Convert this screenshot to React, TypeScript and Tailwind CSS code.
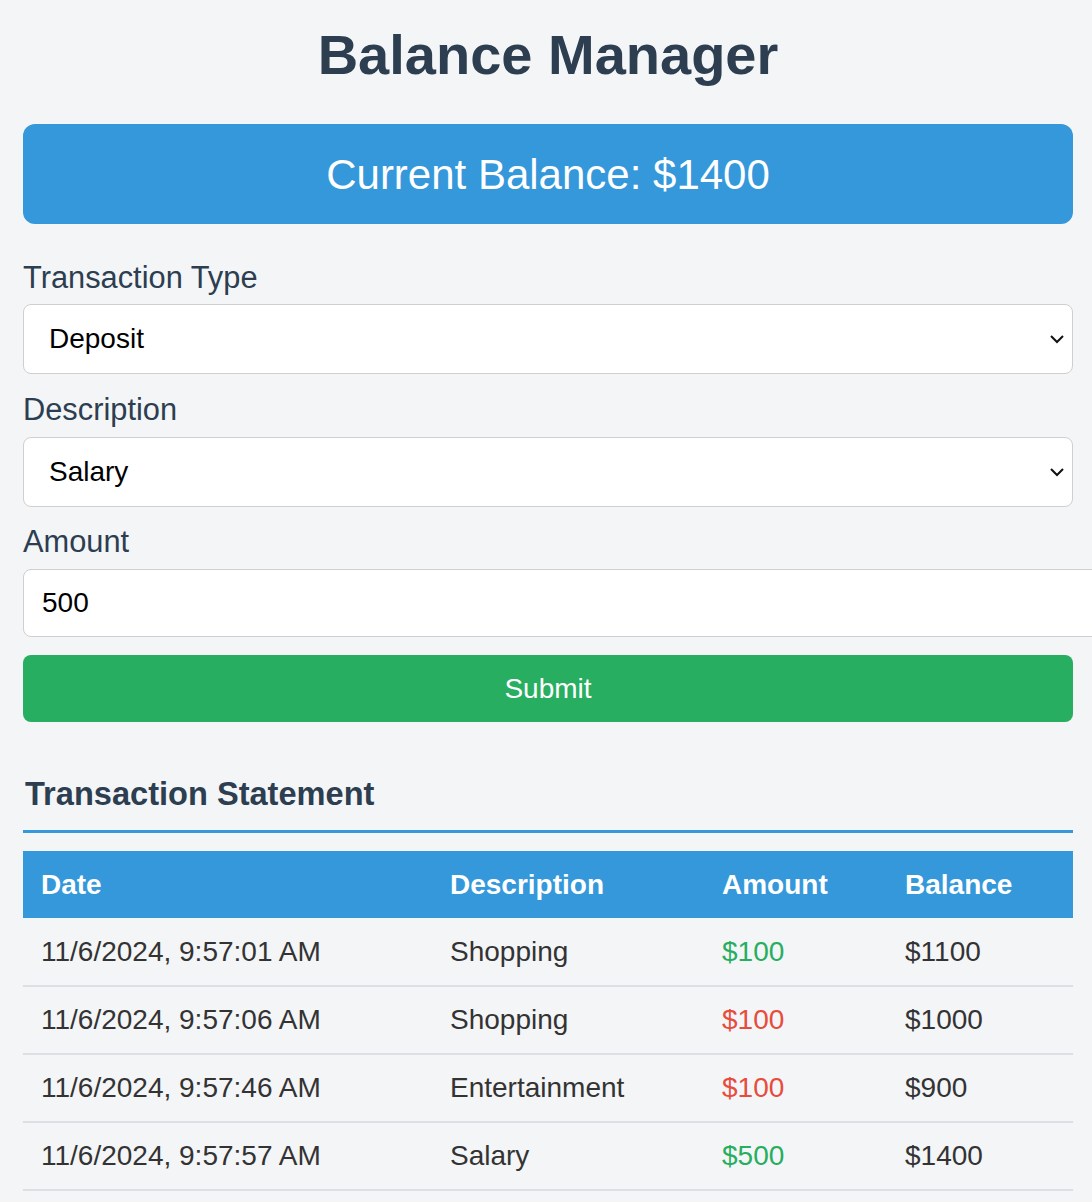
import { useState } from 'react';

type Txn = {
  date: string;
  description: string;
  amount: number;
  type: 'deposit' | 'withdraw';
  balance: number;
};

const TRANSACTIONS: Txn[] = [
  { date: '11/6/2024, 9:57:01 AM', description: 'Shopping', amount: 100, type: 'deposit', balance: 1100 },
  { date: '11/6/2024, 9:57:06 AM', description: 'Shopping', amount: 100, type: 'withdraw', balance: 1000 },
  { date: '11/6/2024, 9:57:46 AM', description: 'Entertainment', amount: 100, type: 'withdraw', balance: 900 },
  { date: '11/6/2024, 9:57:57 AM', description: 'Salary', amount: 500, type: 'deposit', balance: 1400 },
];

function Chevron() {
  return (
    <svg
      className="pointer-events-none absolute right-[8px] top-1/2 -translate-y-1/2"
      width="16"
      height="10"
      viewBox="0 0 16 10"
      fill="none"
    >
      <path d="M2 2 L8 8 L14 2" stroke="#111" strokeWidth="2" />
    </svg>
  );
}

export default function App() {
  const [type, setType] = useState('deposit');
  const [description, setDescription] = useState('salary');
  const [amount, setAmount] = useState('500');

  return (
    <div className="min-h-screen overflow-hidden bg-[#f4f5f7] font-['Liberation_Sans',Arial,sans-serif]">
      <div className="w-[1050px] ml-[23px] pt-[20px] pb-[12px]">
        {/* Header */}
        <h1 className="text-center text-[56px] leading-[70px] font-bold text-[#2c3e50]">
          Balance Manager
        </h1>

        <div className="mt-[34px] h-[100px] rounded-[12px] bg-[#3498db] flex items-center justify-center">
          <span className="text-[42px] text-white">Current Balance: $1400</span>
        </div>

        {/* Form */}
        <form className="mt-[34px]" onSubmit={(e) => e.preventDefault()}>
          <label className="block text-[30.8px] leading-[40px] text-[#2c3e50]">Transaction Type</label>
          <div className="relative mt-[6px]">
            <select
              value={type}
              onChange={(e) => setType(e.target.value)}
              className="w-full h-[70px] appearance-none rounded-[8px] border border-[#cfcfcf] bg-white pl-[25px] text-[28px] text-black outline-none"
            >
              <option value="deposit">Deposit</option>
              <option value="withdraw">Withdraw</option>
            </select>
            <Chevron />
          </div>

          <label className="mt-[16px] block text-[30.8px] leading-[40px] text-[#2c3e50]">Description</label>
          <div className="relative mt-[7px]">
            <select
              value={description}
              onChange={(e) => setDescription(e.target.value)}
              className="w-full h-[70px] appearance-none rounded-[8px] border border-[#cfcfcf] bg-white pl-[25px] text-[28px] text-black outline-none"
            >
              <option value="salary">Salary</option>
              <option value="shopping">Shopping</option>
              <option value="entertainment">Entertainment</option>
            </select>
            <Chevron />
          </div>

          <label className="mt-[15px] block text-[30.8px] leading-[40px] text-[#2c3e50]">Amount</label>
          <input
            type="number"
            value={amount}
            onChange={(e) => setAmount(e.target.value)}
            className="mt-[7px] block w-[1100px] h-[68px] rounded-[8px] border border-[#cfcfcf] bg-white px-[18px] text-[28px] text-black outline-none"
          />

          <button
            type="submit"
            className="mt-[18px] w-full h-[67px] rounded-[8px] bg-[#27ae60] text-[28px] text-white"
          >
            Submit
          </button>
        </form>

        {/* Statement */}
        <h2 className="mt-[50px] pl-[2px] text-[32.6px] leading-[44px] font-bold text-[#2c3e50]">
          Transaction Statement
        </h2>
        <div className="mt-[14px] h-[3px] bg-[#3498db]" />

        <table className="mt-[18px] w-full border-collapse table-fixed text-[28px]">
          <colgroup>
            <col className="w-[409px]" />
            <col className="w-[272px]" />
            <col className="w-[183px]" />
            <col className="w-[186px]" />
          </colgroup>
          <thead>
            <tr className="bg-[#3498db] text-white h-[67px]">
              <th className="px-[18px] text-left font-bold">Date</th>
              <th className="px-[18px] text-left font-bold">Description</th>
              <th className="px-[18px] text-left font-bold">Amount</th>
              <th className="px-[18px] text-left font-bold">Balance</th>
            </tr>
          </thead>
          <tbody className="text-[#333]">
            {TRANSACTIONS.map((t) => (
              <tr key={t.date} className="h-[68px] border-b-2 border-[#dcdfe3]">
                <td className="px-[18px]">{t.date}</td>
                <td className="px-[18px]">{t.description}</td>
                <td className={`px-[18px] ${t.type === 'deposit' ? 'text-[#27ae60]' : 'text-[#e74c3c]'}`}>
                  ${t.amount}
                </td>
                <td className="px-[18px]">${t.balance}</td>
              </tr>
            ))}
          </tbody>
        </table>
      </div>
    </div>
  );
}
